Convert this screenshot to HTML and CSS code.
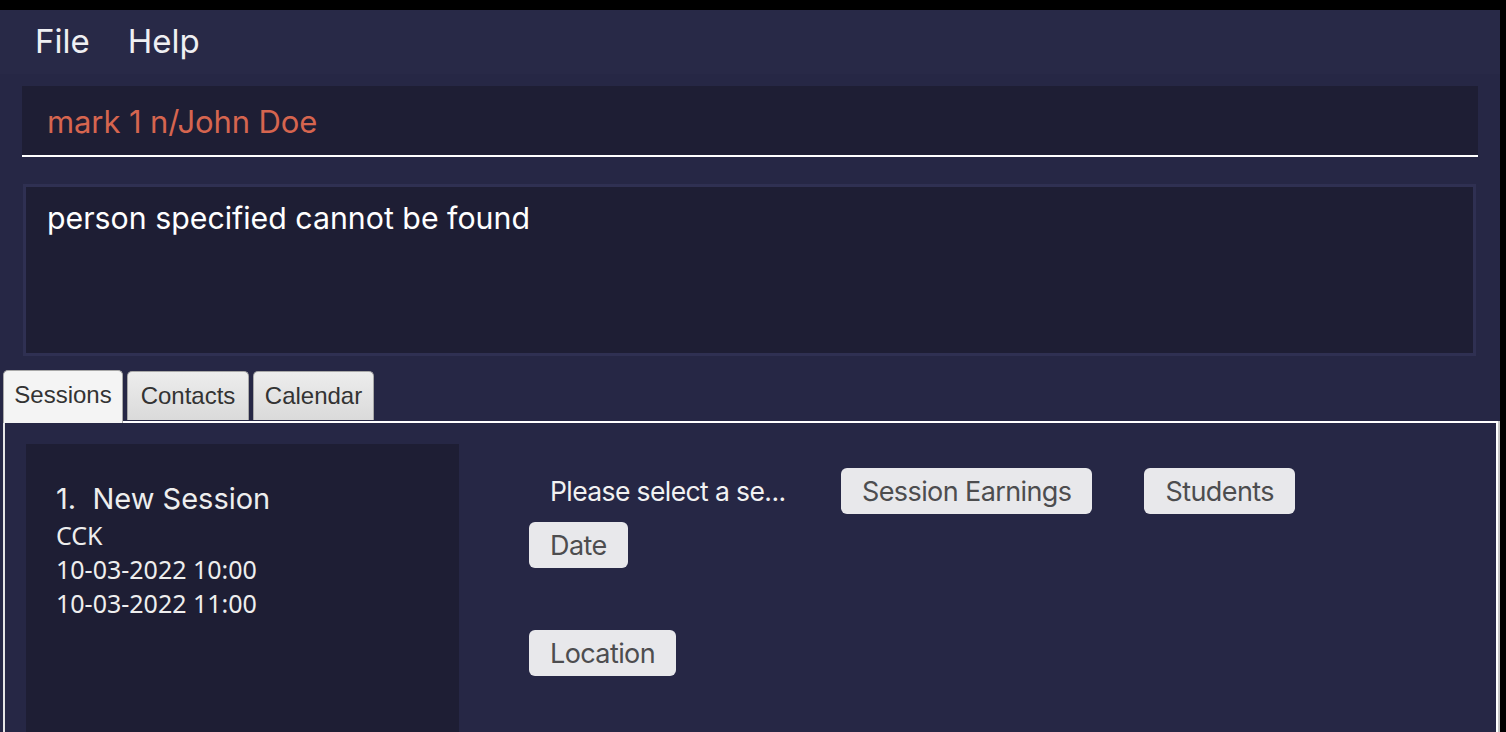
FILE: index.html
```html
<!DOCTYPE html>
<html>
<head>
<meta charset="utf-8">
<link rel="stylesheet" href="styles.css">
</head>
<body>
<div class="app">
  <div class="menubar">
    <span class="menu-item">File</span>
    <span class="menu-item">Help</span>
  </div>
  <div class="command-wrap">
    <div class="command-box">mark 1 n/John Doe</div>
  </div>
  <div class="result-wrap">
    <div class="result-box">person specified cannot be found</div>
  </div>
  <div class="tabs">
    <div class="tab tab-active">Sessions</div>
    <div class="tab">Contacts</div>
    <div class="tab">Calendar</div>
  </div>
  <div class="tab-content">
    <div class="session-list">
      <div class="session-card">
        <div class="session-title">1.&nbsp;&nbsp;New Session</div>
        <div class="session-line">CCK</div>
        <div class="session-line">10-03-2022 10:00</div>
        <div class="session-line">10-03-2022 11:00</div>
      </div>
    </div>
    <div class="details">
      <div class="row row-first">
        <span class="placeholder">Please select a se...</span>
        <span class="chip">Session Earnings</span>
        <span class="chip chip-students">Students</span>
      </div>
      <div class="row row-date">
        <span class="chip">Date</span>
      </div>
      <div class="row row-location">
        <span class="chip">Location</span>
      </div>
    </div>
  </div>
</div>
</body>
</html>
```

FILE: styles.css
```css
html, body {
  margin: 0;
  padding: 0;
  background: #000;
  height: 732px;
  overflow: hidden;
}

.app {
  margin-top: 10px;
  width: 1500px;
  height: 722px;
  background: #262745;
  font-family: Inter, "Noto Sans", sans-serif;
  display: flex;
  flex-direction: column;
  overflow: hidden;
}

.menubar {
  height: 64px;
  background: #282947;
  display: flex;
  align-items: center;
  padding-left: 35px;
  gap: 38px;
  box-sizing: border-box;
}

.menu-item {
  color: #efeff2;
  font-size: 33px;
  line-height: 1;
  padding-bottom: 2px;
}

.command-wrap {
  padding: 12px 22px 0 22px;
}

.command-box {
  height: 69px;
  background: #1e1e34;
  border-bottom: 2px solid #ffffff;
  color: #d6654f;
  font-size: 31px;
  letter-spacing: -0.1px;
  line-height: 71px;
  padding-left: 25px;
}

.result-wrap {
  padding: 27px 24px 0 23px;
}

.result-box {
  height: 172px;
  background: #1e1e34;
  border: 3px solid #2f3052;
  color: #ffffff;
  font-size: 30.3px;
  padding: 11px 0 0 21px;
  box-sizing: border-box;
  line-height: 40px;
}

.tabs {
  display: flex;
  gap: 4px;
  padding-left: 3px;
  margin-top: 14px;
  height: 51px;
  align-items: flex-end;
  position: relative;
  z-index: 2;
}

.tab {
  height: 49px;
  box-sizing: border-box;
  border: 1px solid #a8a8a8;
  border-bottom: none;
  border-radius: 5px 5px 0 0;
  background: linear-gradient(#ededed, #dadada);
  font-family: "Liberation Sans", Arial, sans-serif;
  font-size: 24px;
  color: #333333;
  display: flex;
  align-items: center;
  justify-content: center;
  margin-bottom: 1px;
}

.tab:nth-child(1) { width: 120px; }
.tab:nth-child(2) { width: 122px; }
.tab:nth-child(3) { width: 121px; }

.tab-active {
  height: 53px;
  margin-bottom: -2px;
  background: #f4f4f4;
  padding-bottom: 4px;
}

.tab-content {
  flex: 1;
  margin-left: 3px;
  margin-right: 2px;
  border-top: 2px solid #ffffff;
  border-left: 2px solid #e6e6e6;
  border-right: 2px solid #ffffff;
  box-shadow: 2px 0 0 #c4c4c4;
  display: flex;
  padding: 21px 0 0 21px;
  box-sizing: border-box;
  position: relative;
  z-index: 1;
}

.session-list {
  width: 433px;
  background: #1e1e34;
  flex-shrink: 0;
}

.session-card {
  padding: 38px 0 0 30px;
}

.session-title {
  font-family: Inter, sans-serif;
  font-size: 29px;
  color: #eeeeee;
  line-height: 34px;
  margin-bottom: 2px;
}

.session-line {
  font-family: "Noto Sans", sans-serif;
  font-size: 25px;
  color: #eeeeee;
  line-height: 34px;
}

.details {
  margin-left: 70px;
  padding-top: 24px;
  display: flex;
  flex-direction: column;
}

.row {
  display: flex;
  align-items: center;
}

.placeholder {
  width: 312px;
  box-sizing: border-box;
  padding-left: 21px;
  color: #f2f2f2;
  font-size: 26.5px;
  letter-spacing: -0.6px;
}

.chip {
  display: inline-flex;
  align-items: center;
  height: 46px;
  padding: 0 21px;
  box-sizing: border-box;
  background: #e8e8eb;
  border-radius: 6px;
  color: #4d4d4f;
  font-size: 27px;
  letter-spacing: -0.6px;
}

.chip-students {
  margin-left: 52px;
}

.row-date {
  margin-top: 8px;
}

.row-location {
  margin-top: 62px;
}
```
